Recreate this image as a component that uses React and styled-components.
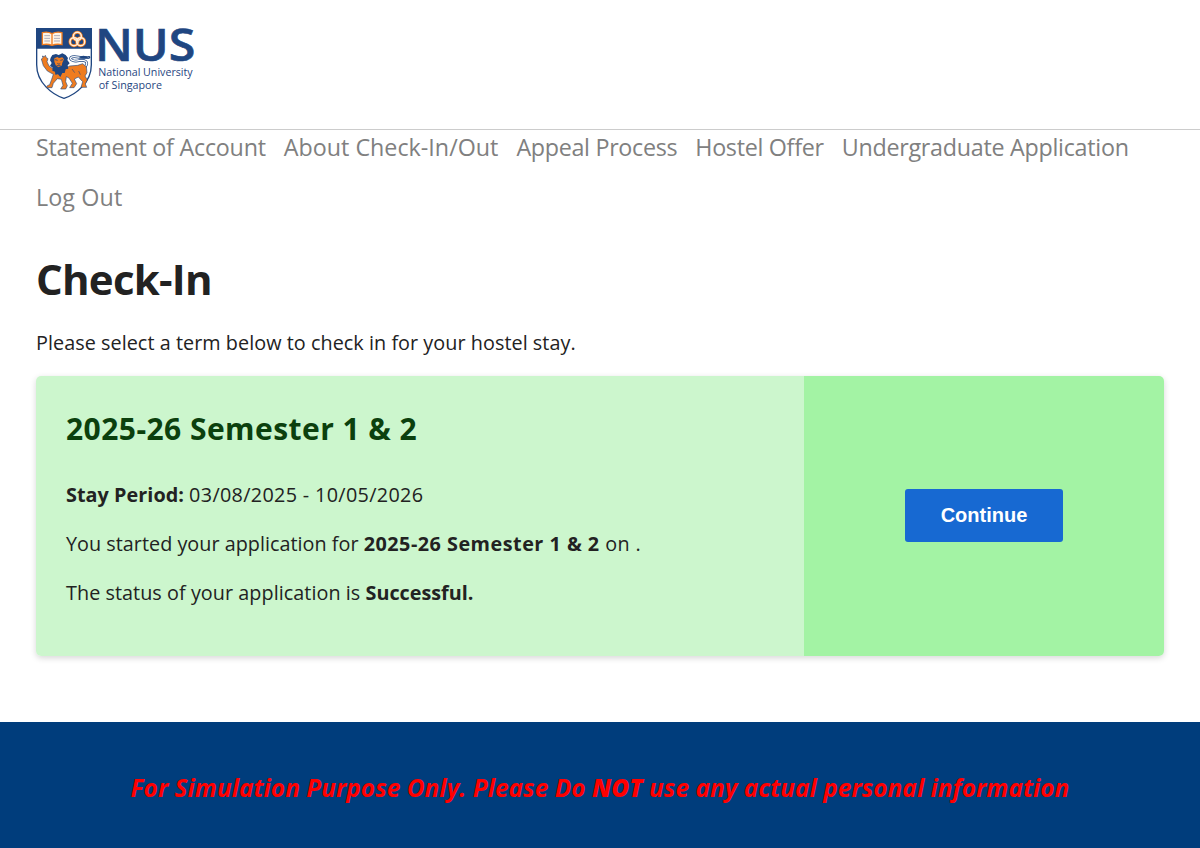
import React from "react";
import styled, { createGlobalStyle } from "styled-components";

const GlobalStyle = createGlobalStyle`
  * { box-sizing: border-box; }
  body {
    margin: 0;
    background: #fff;
    color: #222;
    font-family: "Segoe UI", "Open Sans", "Noto Sans", sans-serif;
    font-size: 19.8px;
  }
`;

const Page = styled.div`
  display: flex;
  flex-direction: column;
  min-height: 848px;
`;

const Header = styled.header`
  height: 130px;
  padding: 27px 36px 0;
  border-bottom: 1px solid #ccc;
`;

const Logo = styled.svg`
  display: block;
  width: 160px;
  height: 73px;
  overflow: visible;
`;

const Nav = styled.nav`
  display: flex;
  flex-wrap: wrap;
  gap: 16px 18px;
  padding: 0 36px;
`;

const NavLink = styled.a`
  color: #808080;
  font-size: 23.3px;
  line-height: 34px;
  letter-spacing: ${(p) => p.$tracking};
  text-decoration: none;
  white-space: nowrap;
`;

const Main = styled.main`
  padding: 33px 36px 66px;
`;

const Title = styled.h1`
  margin: 0;
  font-size: 42px;
  line-height: 64px;
  font-weight: 700;
  letter-spacing: -0.75px;
`;

const Intro = styled.p`
  margin: 17px 0 19px;
  line-height: 29px;
  letter-spacing: 0.05px;
`;

const Card = styled.section`
  display: flex;
  height: 280px;
  border-radius: 5px;
  overflow: hidden;
  box-shadow: 0 2px 6px rgba(0, 0, 0, 0.16);
`;

const CardBody = styled.div`
  width: 768px;
  padding: 30px;
  background: #ccf6cd;
`;

const CardAction = styled.div`
  flex: 1;
  display: flex;
  align-items: center;
  justify-content: center;
  padding-bottom: 1px;
  background: #a3f3a4;
`;

const CardTitle = styled.h2`
  margin: 0 0 28px;
  color: #0b400d;
  font-size: 30px;
  line-height: 46px;
  font-weight: 700;
  letter-spacing: 0.45px;
`;

const CardLine = styled.p`
  margin: 0 0 20px;
  line-height: 29px;
`;

const Phrase = styled.span`
  font-weight: ${(p) => (p.$strong ? 700 : 400)};
  letter-spacing: ${(p) => p.$tracking || "0"};
`;

const Button = styled.button`
  width: 158px;
  height: 53px;
  padding: 0 0 1px;
  border: 0;
  border-radius: 3px;
  background: #1769d2;
  color: #fff;
  font: 700 20px "Liberation Sans", Arial, sans-serif;
`;

const Footer = styled.footer`
  flex: 1;
  display: flex;
  align-items: center;
  justify-content: center;
  padding-top: 6px;
  background: #003d7c;
  color: #f00;
  font-size: 24.4px;
  font-style: italic;
  font-weight: 700;
  letter-spacing: 0.04px;
  line-height: 36px;
  white-space: nowrap;

  b { font-weight: 800; }
`;

const blue = "#1f4681";
const orange = "#ef7c20";

function NusLogo() {
  return (
    <Logo viewBox="18 21 480 219" role="img" aria-label="National University of Singapore">
      <path d="M20 26H184V134C184 188 137 224 102 235C67 224 20 188 20 134Z" fill="#fff" stroke={blue} strokeWidth="4" />
      <path d="M18 24H186V86H18Z" fill={blue} />
      <g stroke={orange} strokeWidth="4" fill="#fff4e4">
        <path d="M37 38Q53 34 66 41Q80 34 96 38V74Q79 71 66 76Q53 71 37 74Z" />
        <path d="M66 40V76" fill="none" />
        <path d="M43 47H60M43 55H60M43 63H60M72 47H90M72 55H90M72 63H90" fill="none" stroke="#9c9bb0" strokeWidth="2.5" />
      </g>
      <g fill="none">
        <g stroke={orange} strokeWidth="9">
          <circle cx="142" cy="49" r="12" />
          <circle cx="132" cy="65" r="12" />
          <circle cx="152" cy="65" r="12" />
        </g>
        <g stroke="#fff0df" strokeWidth="4.5">
          <circle cx="142" cy="49" r="12" />
          <circle cx="132" cy="65" r="12" />
          <circle cx="152" cy="65" r="12" />
        </g>
      </g>
      <path d="M166 140C178 124 163 119 147 122C132 126 117 119 123 112C134 105 153 117 177 112" fill="none" stroke={blue} strokeWidth="8" strokeLinecap="round" />
      <path d="M166 140C178 124 163 119 147 122C132 126 117 119 123 112C134 105 153 117 174 112" fill="none" stroke="#fff" strokeWidth="4" strokeLinecap="round" />
      <path d="M146 112Q159 103 177 112Q162 119 146 112Z" fill={blue} />
      <g stroke={blue} strokeWidth="1.8" strokeLinejoin="round">
        <path d="M70 163L52 153L40 137L34 117L39 113L37 108L43 110L46 106L49 113L54 116L51 125L57 138L73 149L104 147L119 138L143 136L158 131L169 140L171 158L165 168L172 180L166 192L170 202H153L158 185L145 171L133 177L140 191L132 203H119L127 190L117 174L109 170L107 185L112 197L107 207H92L99 196L94 178L82 176L70 190L66 203H49L52 197L59 194L65 178Z" fill={orange} />
      </g>
      <path d="M62 113L67 105L78 102L86 105L97 100L107 105L114 114L112 120L119 130L113 136L115 146L107 148L104 159L97 159L91 171L84 163L76 164L75 155L67 152L68 143L60 137L65 129L60 121Z" fill={blue} />
      <path d="M73 115L82 111L87 114L97 112L102 118L97 128L95 137L85 142L77 136L73 125Z" fill={orange} />
      <path d="M75 119L83 121M99 119L91 121M82 130L87 133L91 130M80 137H92" fill="none" stroke={blue} strokeWidth="2.4" />
      <path d="M126 147L134 158M146 153L151 164" stroke={blue} strokeWidth="1.8" />
      <g fill={blue} fontFamily="Open Sans, Noto Sans, sans-serif">
        <text x="195" y="122" fontSize="136" fontWeight="600" stroke={blue} strokeWidth="2" textLength="301" lengthAdjust="spacingAndGlyphs">NUS</text>
        <text x="205" y="168" fontSize="31" fontWeight="500" textLength="283" lengthAdjust="spacingAndGlyphs">National University</text>
        <text x="206" y="206" fontSize="31" fontWeight="500" textLength="190" lengthAdjust="spacingAndGlyphs">of Singapore</text>
      </g>
    </Logo>
  );
}

const links = [
  ["Statement of Account", "-0.24px"],
  ["About Check-In/Out", "0"],
  ["Appeal Process", "-0.31px"],
  ["Hostel Offer", "-0.3px"],
  ["Undergraduate Application", "-0.27px"],
  ["Log Out", "0.1px"],
];

export default function App() {
  return (
    <Page>
      <GlobalStyle />
      <Header><NusLogo /></Header>
      <Nav>
        {links.map(([label, tracking]) => (
          <NavLink key={label} $tracking={tracking}>{label}</NavLink>
        ))}
      </Nav>
      <Main>
        <Title>Check-In</Title>
        <Intro>Please select a term below to check in for your hostel stay.</Intro>
        <Card>
          <CardBody>
            <CardTitle>2025-26 Semester 1 &amp; 2</CardTitle>
            <CardLine>
              <Phrase $strong $tracking="0.05px">Stay Period:</Phrase> <Phrase $tracking="0.33px">03/08/2025 - 10/05/2026</Phrase>
            </CardLine>
            <CardLine>
              <Phrase $tracking="0.02px">You started your application for </Phrase>
              <Phrase $strong $tracking="0.5px">2025-26 Semester 1 &amp; 2</Phrase>
              <Phrase $tracking="0.4px"> on .</Phrase>
            </CardLine>
            <CardLine>
              <Phrase $tracking="0.05px">The status of your application is </Phrase>
              <Phrase $strong>Successful.</Phrase>
            </CardLine>
          </CardBody>
          <CardAction><Button>Continue</Button></CardAction>
        </Card>
      </Main>
      <Footer><span>For Simulation Purpose Only. Please Do <b>NOT</b> use any actual personal information</span></Footer>
    </Page>
  );
}
